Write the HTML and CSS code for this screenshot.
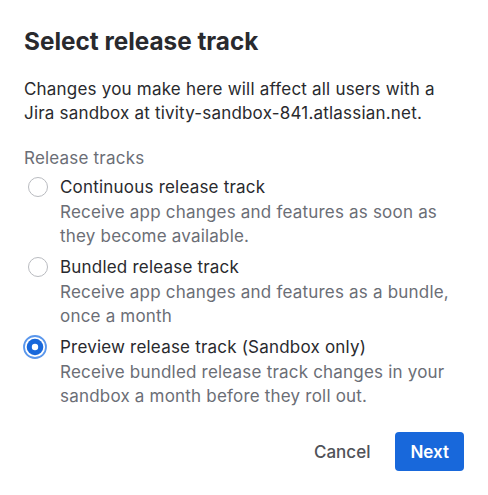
FILE: index.html
```html
<!DOCTYPE html>
<html lang="en">
<head>
<meta charset="utf-8">
<title>Select release track</title>
<link rel="stylesheet" href="styles.css">
</head>
<body>
<section class="modal">
  <h1 class="title">Select release track</h1>
  <p class="intro">Changes you make here will affect all users with a Jira sandbox at tivity-sandbox-841.atlassian.net.</p>
  <fieldset class="tracks">
    <legend class="legend">Release tracks</legend>
    <div class="option">
      <span class="radio">
        <svg width="24" height="24" viewBox="0 0 24 24"><circle cx="12" cy="12" r="9.5" fill="#fff" stroke="#B9BBC0" stroke-width="1"/></svg>
      </span>
      <div class="option-text">
        <div class="option-label">Continuous release track</div>
        <div class="option-desc">Receive app changes and features as soon as they become available.</div>
      </div>
    </div>
    <div class="option">
      <span class="radio">
        <svg width="24" height="24" viewBox="0 0 24 24"><circle cx="12" cy="12" r="9.5" fill="#fff" stroke="#B9BBC0" stroke-width="1"/></svg>
      </span>
      <div class="option-text">
        <div class="option-label">Bundled release track</div>
        <div class="option-desc">Receive app changes and features as a bundle, once a month</div>
      </div>
    </div>
    <div class="option">
      <span class="radio radio-checked">
        <svg width="24" height="24" viewBox="0 0 24 24"><circle cx="12" cy="12" r="11" fill="none" stroke="#5A97EC" stroke-width="1.8"/><circle cx="12" cy="12" r="8.3" fill="#1868DB"/><circle cx="12" cy="12" r="3.2" fill="#fff"/></svg>
      </span>
      <div class="option-text">
        <div class="option-label">Preview release track (Sandbox only)</div>
        <div class="option-desc">Receive bundled release track changes in your sandbox a month before they roll out.</div>
      </div>
    </div>
  </fieldset>
  <div class="actions">
    <button class="btn btn-subtle" type="button">Cancel</button>
    <button class="btn btn-primary" type="button">Next</button>
  </div>
</section>
</body>
</html>
```
FILE: styles.css
```css
* { box-sizing: border-box; }
html, body {
  margin: 0;
  padding: 0;
  background: #ffffff;
}
body {
  font-family: Inter, "Noto Sans", "Liberation Sans", sans-serif;
  color: #292A2E;
  font-size: 17px;
  line-height: 24px;
  letter-spacing: 0.2px;
}
.modal {
  width: 488px;
  padding: 25px 24px 24px 24px;
}
.title {
  margin: 0;
  font-size: 24.3px;
  line-height: 32px;
  font-weight: 700;
  letter-spacing: 0;
  color: #292A2E;
}
.intro {
  margin: 20px 0 0 0;
  line-height: 24px;
  color: #292A2E;
}
.tracks {
  border: 0;
  margin: 21px 0 0 0;
  padding: 0;
  min-width: 0;
}
.legend {
  padding: 0;
  line-height: 24px;
  color: #6B6E76;
  float: left;
  width: 100%;
}
.tracks::after { content: ""; display: table; clear: both; }
.option {
  clear: both;
  display: flex;
  align-items: flex-start;
  padding-top: 5px;
}
.option + .option { padding-top: 7px; }
.radio {
  width: 28px;
  height: 24px;
  flex: none;
  display: flex;
  align-items: center;
  justify-content: center;
  margin-right: 8px;
}
.radio svg { display: block; }
.radio-checked { margin-left: -3px; margin-right: 11px; }
.option-label {
  color: #292A2E;
  line-height: 24px;
}
.option-desc {
  color: #6B6E76;
  line-height: 24px;
  margin-top: 1px;
}
.actions {
  display: flex;
  justify-content: flex-end;
  align-items: center;
  gap: 10px;
  margin-top: 24px;
}
.btn {
  font-family: Inter, "Noto Sans", "Liberation Sans", sans-serif;
  font-size: 17px;
  letter-spacing: 0;
  height: 39px;
  padding: 0 15px;
  border: 0;
  border-radius: 4px;
  cursor: pointer;
}
.btn-subtle {
  background: transparent;
  color: #505258;
  font-weight: 500;
}
.btn-primary {
  background: #1868DB;
  color: #ffffff;
  font-weight: 600;
}
```
